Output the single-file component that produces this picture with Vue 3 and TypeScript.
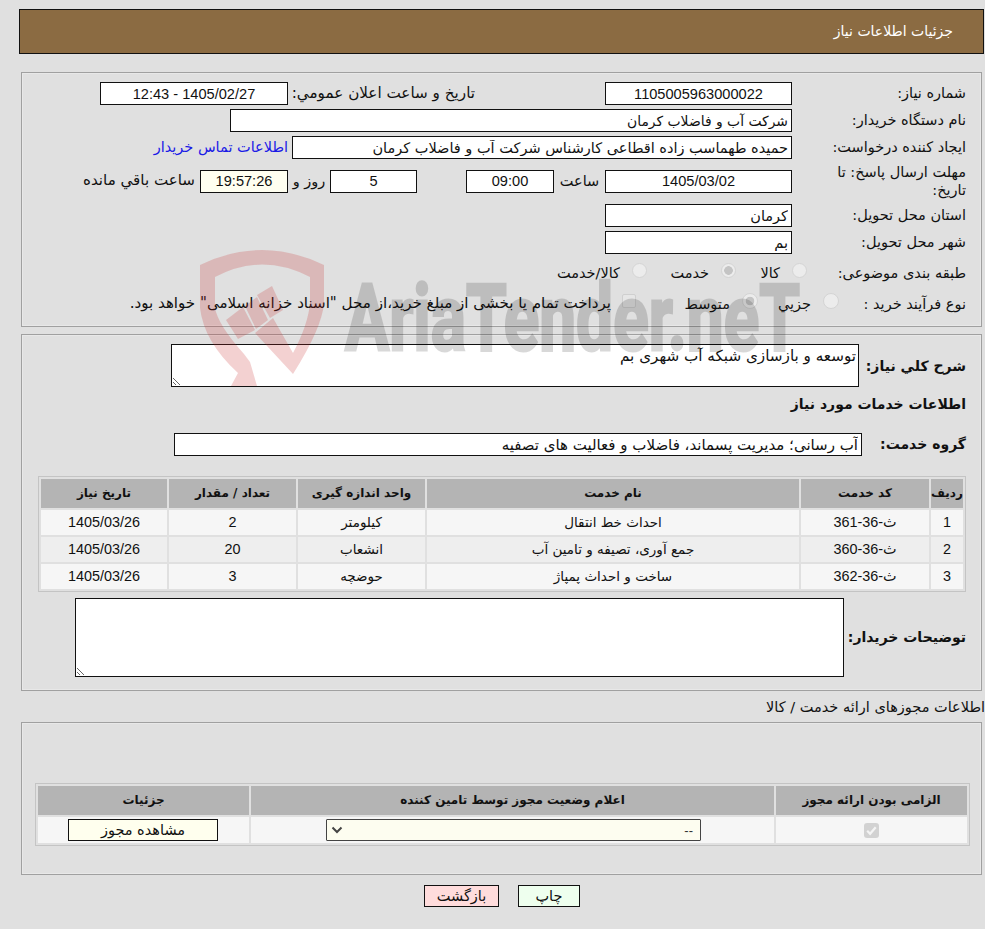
<script setup lang="ts">
interface ServiceRow { no: number; code: string; name: string; unit: string; qty: number; date: string }
const rows: ServiceRow[] = [
  { no: 1, code: 'ث-36-361', name: 'احداث خط انتقال', unit: 'کیلومتر', qty: 2, date: '1405/03/26' },
  { no: 2, code: 'ث-36-360', name: 'جمع آوری، تصیفه و تامین آب', unit: 'انشعاب', qty: 20, date: '1405/03/26' },
  { no: 3, code: 'ث-36-362', name: 'ساخت و احداث پمپاژ', unit: 'حوضچه', qty: 3, date: '1405/03/26' },
]
</script>

<template>
  <div class="page" dir="rtl">
    <header class="title-bar">جزئیات اطلاعات نیاز</header>

    <section class="panel panel-one">
      <div class="row h27">
        <label class="lbl">شماره نیاز:</label>
        <input class="field w187 center num" readonly value="1105005963000022" />
        <label class="lbl2">تاریخ و ساعت اعلان عمومي:</label>
        <input class="field w188 center num" readonly value="1405/02/27 - 12:43" />
      </div>
      <div class="row h27">
        <label class="lbl">نام دستگاه خریدار:</label>
        <input class="field w562" readonly value="شرکت آب و فاضلاب کرمان" />
      </div>
      <div class="row h27">
        <label class="lbl">ایجاد کننده درخواست:</label>
        <input class="field w500" readonly value="حمیده طهماسب زاده اقطاعی کارشناس شرکت آب و فاضلاب کرمان" />
        <a class="contact">اطلاعات تماس خریدار</a>
      </div>
      <div class="row deadline">
        <label class="lbl two-line">مهلت ارسال پاسخ: تا تاریخ:</label>
        <input class="field w187 center num" readonly value="1405/03/02" />
        <span class="txt-hour">ساعت</span>
        <input class="field w88 center num" readonly value="09:00" />
        <input class="field w87 center num days" readonly value="5" />
        <span class="txt-day">روز و</span>
        <input class="field w88 center num cream" readonly value="19:57:26" />
        <span class="txt-left">ساعت باقي مانده</span>
      </div>
      <div class="row h27 province">
        <label class="lbl">استان محل تحویل:</label>
        <input class="field w187" readonly value="کرمان" />
      </div>
      <div class="row h27">
        <label class="lbl">شهر محل تحویل:</label>
        <input class="field w187" readonly value="بم" />
      </div>
      <div class="row cat">
        <label class="lbl cat-lbl">طبقه بندی موضوعی:</label>
        <span class="opt o1"><i class="radio"></i>کالا</span>
        <span class="opt o2"><i class="radio on"></i>خدمت</span>
        <span class="opt o3"><i class="radio"></i>کالا/خدمت</span>
      </div>
      <div class="row proc">
        <label class="lbl proc-lbl">نوع فرآیند خرید :</label>
        <span class="opt p1"><i class="radio big"></i>جزيي</span>
        <span class="opt p2"><i class="radio big on"></i>متوسط</span>
        <span class="opt p3"><i class="check"></i>پرداخت تمام یا بخشی از مبلغ خرید،از محل "اسناد خزانه اسلامی" خواهد بود.</span>
      </div>
    </section>

    <section class="panel panel-two">
      <div class="row desc">
        <label class="lbl-b">شرح کلي نیاز:</label>
        <textarea class="area a1" readonly>توسعه و بازسازی شبکه آب شهری بم</textarea>
      </div>
      <h3 class="sub">اطلاعات خدمات مورد نیاز</h3>
      <div class="row group">
        <label class="lbl-b g">گروه خدمت:</label>
        <input class="field w688" readonly value="آب رسانی؛ مدیریت پسماند، فاضلاب و فعالیت های تصفیه" />
      </div>
      <div class="table-wrap t1">
        <table>
          <colgroup>
            <col class="c34" /><col class="c130" /><col class="c374" />
            <col class="c129" /><col class="c129" /><col class="c128" />
          </colgroup>
          <thead>
            <tr><th>ردیف</th><th>کد خدمت</th><th>نام خدمت</th><th>واحد اندازه گیری</th><th>تعداد / مقدار</th><th>تاریخ نیاز</th></tr>
          </thead>
          <tbody>
            <tr v-for="r in rows" :key="r.no">
              <td class="num">{{ r.no }}</td>
              <td class="num">{{ r.code }}</td>
              <td>{{ r.name }}</td>
              <td>{{ r.unit }}</td>
              <td class="num">{{ r.qty }}</td>
              <td class="num">{{ r.date }}</td>
            </tr>
          </tbody>
        </table>
      </div>
      <div class="row buyer">
        <label class="lbl-b b2">توضیحات خریدار:</label>
        <textarea class="area a2" readonly></textarea>
      </div>
    </section>

    <div class="lic-title">اطلاعات مجوزهای ارائه خدمت / کالا</div>

    <section class="panel panel-three">
      <div class="table-wrap t2">
        <table>
          <colgroup><col class="c193" /><col class="c525" /><col class="c213" /></colgroup>
          <thead>
            <tr><th>الزامی بودن ارائه مجوز</th><th>اعلام وضعیت مجوز توسط تامین کننده</th><th>جزئیات</th></tr>
          </thead>
          <tbody>
            <tr>
              <td><span class="chk"><svg viewBox="0 0 15 15" width="15" height="15"><path d="M3.2 7.8l2.9 3 5.6-6.6" fill="none" stroke="#f4f4f4" stroke-width="2.2" /></svg></span></td>
              <td>
                <div class="select">
                  <span class="dash">--</span>
                  <svg viewBox="0 0 12 8" width="12" height="8"><path d="M1.5 1.5L6 6l4.5-4.5" fill="none" stroke="#444" stroke-width="2" /></svg>
                </div>
              </td>
              <td><button class="view">مشاهده مجوز</button></td>
            </tr>
          </tbody>
        </table>
      </div>
    </section>

    <div class="actions">
      <button class="btn print">چاپ</button>
      <button class="btn back">بازگشت</button>
    </div>

    <svg class="watermark" viewBox="0 0 610 137" width="610" height="137" aria-hidden="true">
      <g fill="#c82828" fill-opacity=".21">
        <path d="M0 15Q62 -15 124 15V53Q122 78 93 124L55 83L73 68L93 103Q108 75 110 53V27Q62 2 15 27V58Q18 75 44 104L50 112L57 136H31L38 123Q4 92 0 58Z" />
        <path d="M26 70L43 57L55 80L38 89Z" />
        <path d="M45 56L57 47L68 70L56 79Z" />
        <path d="M57 45L72 36L83 60L70 68Z" />
      </g>
      <text class="wm-text" x="145" y="100" textLength="455" lengthAdjust="spacingAndGlyphs">AriaTender.neT</text>
    </svg>
  </div>
</template>

<style>
html, body { margin: 0; background: #e0e0e0; }
</style>

<style scoped>
.page {
  position: relative;
  width: 985px;
  height: 929px;
  overflow: hidden;
  box-sizing: border-box;
  padding-top: 9px;
  background: #e0e0e0;
  color: #111;
  font: 14.5px/1.3 "DejaVu Sans", sans-serif;
}
.title-bar {
  box-sizing: border-box;
  width: 965px;
  height: 45px;
  margin-right: 1px;
  padding: 12px 30px 0 0;
  background: #8b6b42;
  border: 1px solid #111;
  color: #fff;
  font-size: 14px;
}
.panel {
  box-sizing: border-box;
  width: 961px;
  margin-right: 3px;
  border: 1px solid #a0a0a0;
  box-shadow: inset 0 0 0 1px #e8e8e8;
}
.panel-one { height: 255px; margin-top: 18px; padding: 7px 15px 0 0; }
.panel-two { height: 357px; margin-top: 7px; padding: 9px 15px 0 0; }
.panel-three { height: 153px; margin-top: 6px; padding: 60px 11px 0 0; }
.row { display: flex; align-items: center; }
.h27 { height: 27px; }
.lbl { flex: none; width: 174px; }
.field {
  box-sizing: border-box;
  height: 23px;
  padding: 0 3px;
  border: 1px solid #111;
  background: #fff;
  color: #111;
  font: inherit;
  outline: none;
  text-align: right;
}
.center { text-align: center; }
.num { font-family: "Liberation Sans", "DejaVu Sans", sans-serif; font-size: 14.6px; }
.w187 { width: 187px; }
.w188 { width: 188px; }
.w88 { width: 88px; }
.w87 { width: 87px; }
.w562 { width: 562px; font-size: 13.9px; }
.w500 { width: 500px; }
.w688 { width: 688px; font-size: 15px; }
.cream { background: #fffff0; }
.lbl2 { margin: 0 130px 0 5px; width: 182px; font-size: 15.2px; text-align: right; white-space: nowrap; }
.contact { margin-right: 4px; color: #1a1ae6; white-space: nowrap; }
.deadline { height: 34px; margin-top: 3px; }
.two-line { box-sizing: border-box; padding-left: 30px; line-height: 18px; }
.txt-hour { width: 51px; text-align: center; flex: none; }
.days { margin-right: 49px; }
.txt-day { width: 42px; text-align: center; flex: none; }
.txt-left { margin-right: 5px; font-size: 15.1px; white-space: nowrap; }
.province { margin-top: 4px; }
.cat { height: 30px; margin-top: 2px; }
.proc { height: 30px; margin-top: 1px; }
.cat-lbl { width: 159px; }
.proc-lbl { width: 127px; }
.opt { display: inline-flex; align-items: center; white-space: nowrap; flex: none; }
.p3 { font-size: 15.1px; }
.radio {
  box-sizing: border-box;
  display: block;
  flex: none;
  width: 15px;
  height: 15px;
  margin-left: 12px;
  border-radius: 50%;
  background: #ececec;
  border: 1px solid #d4d4d4;
  transform: translateY(-3px);
}
.radio.big { width: 16px; height: 16px; }
.radio.on { background: radial-gradient(circle, #c4c4c4 0 4px, #ececec 4.6px); }
.check {
  box-sizing: border-box;
  display: block;
  flex: none;
  width: 14px;
  height: 14px;
  margin-left: 11px;
  border: 1px solid #cfcfcf;
  border-radius: 2px;
  background: #e6e6e6;
  transform: translateY(-3px);
}
.o1 { width: 71px; }
.o2 { width: 89px; }
.p1 { width: 81px; }
.p2 { width: 122px; }
.lbl-b { flex: none; font-size: 14px; font-weight: 700; }
.desc { height: 43px; }
.desc .lbl-b { width: 107px; margin-top: 1px; }
.area {
  box-sizing: border-box;
  display: block;
  padding: 2px;
  border: 1px solid #111;
  background: #fff;
  color: #111;
  font: inherit;
  outline: none;
}
.a1 { width: 688px; height: 43px; font-size: 15.2px; }
.a2 { width: 769px; height: 79px; }
.sub { margin: 7px 0 0; height: 30px; font-size: 14px; line-height: 20px; font-weight: 700; }
.group { margin-top: 9px; height: 23px; }
.g { width: 104px; }
.table-wrap { box-sizing: border-box; border: 1px solid #c4c4c4; padding: 1px; }
.t1 { width: 928px; margin-top: 20px; height: 116px; }
.t2 { width: 935px; height: 63px; }
table { width: 100%; border-collapse: separate; border-spacing: 0; table-layout: fixed; }
.c34 { width: 34px; }
.c130 { width: 130px; }
.c374 { width: 374px; }
.c129 { width: 129px; }
.c128 { width: 128px; }
.c193 { width: 193px; }
.c525 { width: 525px; }
.c213 { width: 213px; }
th {
  box-sizing: border-box;
  height: 31px;
  padding: 0;
  border: 1px solid #e0e0e0;
  background: #b4b4b4;
  font-size: 12px;
  font-weight: 700;
}
td {
  box-sizing: border-box;
  height: 28px;
  padding: 0;
  border: 1px solid #e0e0e0;
  text-align: center;
  background: #f6f6f6;
  font-size: 13.5px;
}
td.num { font-size: 14.4px; }
.t1 tbody tr:nth-child(2) td { background: #eeeeee; }
.t1 td { height: 27px; }
.buyer { margin-top: 6px; height: 79px; }
.b2 { width: 122px; }
.lic-title { height: 18px; margin-top: 7px; white-space: nowrap; line-height: 18px; }
.chk {
  display: inline-block;
  width: 15px;
  height: 15px;
  border-radius: 3px;
  background: #d2d2d2;
  vertical-align: middle;
}
.select {
  box-sizing: border-box;
  display: flex;
  align-items: center;
  justify-content: space-between;
  width: 375px;
  height: 22px;
  margin-right: 73px;
  padding: 0 7px 0 4px;
  border: 1px solid #444;
  border-radius: 1px;
  background: #fdfdf0;
  color: #333;
  font: 13px "Liberation Sans", sans-serif;
}
.view {
  box-sizing: border-box;
  display: block;
  width: 150px;
  height: 22px;
  margin-right: 31px;
  padding: 0;
  border: 1px solid #111;
  background: #ffffee;
  color: #111;
  font: 14.5px "DejaVu Sans", sans-serif;
}
.actions { display: flex; gap: 19px; margin: 10px 405px 0 0; }
.btn {
  box-sizing: border-box;
  height: 22px;
  padding: 0;
  border: 1px solid #111;
  color: #111;
  font: inherit;
}
.print { width: 62px; background: #eeffee; }
.back { width: 75px; background: #ffdcdc; }
.watermark {
  position: absolute;
  left: 200px;
  top: 250px;
  direction: ltr;
  pointer-events: none;
}
.wm-text {
  font: 700 92px "Roboto", sans-serif;
  fill: #000;
  stroke: #000;
  stroke-width: 3px;
  opacity: .15;
}
</style>
